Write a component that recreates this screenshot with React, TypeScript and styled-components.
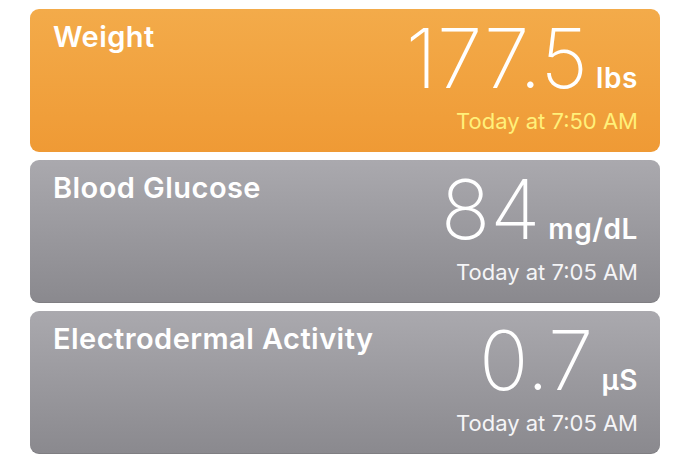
import React from 'react'
import styled, { createGlobalStyle } from 'styled-components'

const GlobalStyle = createGlobalStyle`
  html, body {
    margin: 0;
    padding: 0;
    background: #ffffff;
  }
  body {
    font-family: Inter, "Open Sans", "Liberation Sans", sans-serif;
    -webkit-font-smoothing: antialiased;
  }
`

type Tone = 'orange' | 'gray'

interface Metric {
  title: string
  value: string
  unit: string
  time: string
  tone: Tone
}

const metrics: Metric[] = [
  { title: 'Weight', value: '177.5', unit: 'lbs', time: 'Today at 7:50 AM', tone: 'orange' },
  { title: 'Blood Glucose', value: '84', unit: 'mg/dL', time: 'Today at 7:05 AM', tone: 'gray' },
  { title: 'Electrodermal Activity', value: '0.7', unit: 'µS', time: 'Today at 7:05 AM', tone: 'gray' },
]

const App = () => {
  return (
    <>
      <GlobalStyle />
      <List>
        {metrics.map((m) => (
          <Card key={m.title} $tone={m.tone}>
            <Title>{m.title}</Title>
            <Reading>
              <ValueRow>
                <Value>{m.value}</Value>
                <Unit>{m.unit}</Unit>
              </ValueRow>
              <Time $tone={m.tone}>{m.time}</Time>
            </Reading>
          </Card>
        ))}
      </List>
    </>
  )
}

export default App

const List = styled.div`
  display: flex;
  flex-direction: column;
  gap: 8px;
  width: 630px;
  padding: 9px 0 0 30px;
`

const Card = styled.div<{ $tone: Tone }>`
  display: flex;
  justify-content: space-between;
  align-items: flex-start;
  height: 143px;
  box-sizing: border-box;
  padding: 0 22px 0 23px;
  border-radius: 9px;
  color: #ffffff;
  background: ${(p) =>
    p.$tone === 'orange'
      ? 'linear-gradient(180deg, #f3ab4a 0%, #ef9a35 100%)'
      : 'linear-gradient(180deg, #aaa9ae 0%, #8a898e 100%)'};
  box-shadow: ${(p) =>
    p.$tone === 'orange' ? 'none' : 'inset 0 -1px 0 rgba(0, 0, 0, 0.08)'};
`

const Title = styled.div`
  padding-top: 13px;
  font-size: 29px;
  line-height: 29px;
  font-weight: 600;
  letter-spacing: 0.45px;
`

const Reading = styled.div`
  display: flex;
  flex-direction: column;
  align-items: flex-end;
  padding-top: 9px;
`

const ValueRow = styled.div`
  display: flex;
  align-items: baseline;
  gap: 8px;
`

const Value = styled.span`
  font-size: 82px;
  line-height: 82px;
  font-weight: 250;
`

const Unit = styled.span`
  font-size: 28px;
  font-weight: 600;
  letter-spacing: 0.6px;
`

const Time = styled.div<{ $tone: Tone }>`
  margin-top: 10px;
  font-size: 22px;
  line-height: 22px;
  font-weight: 400;
  color: ${(p) => (p.$tone === 'orange' ? '#fff07a' : '#f5f5f7')};
`
